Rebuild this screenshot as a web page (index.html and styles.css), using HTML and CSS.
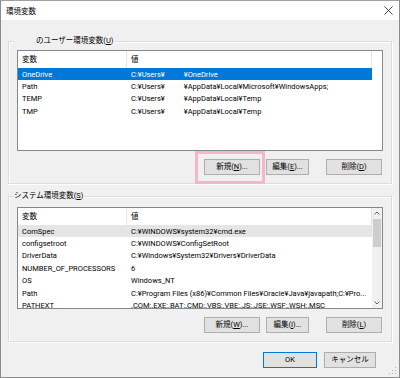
FILE: index.html
```html
<!DOCTYPE html>
<html lang="ja">

<head>
    <meta charset="UTF-8">
    <meta name="viewport" content="width=device-width, initial-scale=1.0">
    <title>環境変数</title>
    <link rel="stylesheet" href="styles.css">
</head>

<body>
    <div class="window">
        <div class="titlebar">
            <span class="title">環境変数</span>
            <svg class="close" width="9" height="9" viewBox="0 0 9 9">
                <path d="M0.5 0.5 L8.5 8.5 M8.5 0.5 L0.5 8.5" stroke="#333" stroke-width="0.9" fill="none" />
            </svg>
        </div>

        <div class="content">
            <!-- user variables -->
            <div class="group group-user">
                <span class="group-label user-label">のユーザー環境変数(<u>U</u>)</span>
                <div class="list list-user">
                    <div class="row head">
                        <span class="col-name">変数</span>
                        <span class="col-value">値</span>
                    </div>
                    <div class="row selected">
                        <span class="col-name">OneDrive</span>
                        <span class="col-value">C:¥Users¥<span class="blank"></span>¥OneDrive</span>
                    </div>
                    <div class="row">
                        <span class="col-name">Path</span>
                        <span class="col-value">C:¥Users¥<span class="blank"></span>¥AppData¥Local¥Microsoft¥WindowsApps;</span>
                    </div>
                    <div class="row">
                        <span class="col-name">TEMP</span>
                        <span class="col-value">C:¥Users¥<span class="blank"></span>¥AppData¥Local¥Temp</span>
                    </div>
                    <div class="row">
                        <span class="col-name">TMP</span>
                        <span class="col-value">C:¥Users¥<span class="blank"></span>¥AppData¥Local¥Temp</span>
                    </div>
                </div>
                <div class="buttons">
                    <button class="btn btn-new">新規(<u>N</u>)...</button>
                    <button class="btn btn-edit">編集(<u>E</u>)...</button>
                    <button class="btn btn-del">削除(<u>D</u>)</button>
                </div>
                <div class="highlight"></div>
            </div>

            <!-- system variables -->
            <div class="group group-system">
                <span class="group-label">システム環境変数(<u>S</u>)</span>
                <div class="list list-system">
                    <div class="rows">
                        <div class="row head">
                            <span class="col-name">変数</span>
                            <span class="col-value">値</span>
                        </div>
                        <div class="row hover">
                            <span class="col-name">ComSpec</span>
                            <span class="col-value">C:¥WINDOWS¥system32¥cmd.exe</span>
                        </div>
                        <div class="row">
                            <span class="col-name">configsetroot</span>
                            <span class="col-value">C:¥WINDOWS¥ConfigSetRoot</span>
                        </div>
                        <div class="row">
                            <span class="col-name">DriverData</span>
                            <span class="col-value">C:¥Windows¥System32¥Drivers¥DriverData</span>
                        </div>
                        <div class="row">
                            <span class="col-name">NUMBER_OF_PROCESSORS</span>
                            <span class="col-value">6</span>
                        </div>
                        <div class="row">
                            <span class="col-name">OS</span>
                            <span class="col-value">Windows_NT</span>
                        </div>
                        <div class="row">
                            <span class="col-name">Path</span>
                            <span class="col-value">C:¥Program Files (x86)¥Common Files¥Oracle¥Java¥javapath;C:¥Pro...</span>
                        </div>
                        <div class="row">
                            <span class="col-name">PATHEXT</span>
                            <span class="col-value">.COM;.EXE;.BAT;.CMD;.VBS;.VBE;.JS;.JSE;.WSF;.WSH;.MSC</span>
                        </div>
                    </div>
                    <div class="scrollbar">
                        <svg class="arrow" width="10" height="11" viewBox="0 0 10 11">
                            <path d="M2.5 6.5 L5 4 L7.5 6.5" stroke="#606060" stroke-width="1" fill="none" />
                        </svg>
                        <div class="thumb"></div>
                        <div class="track"></div>
                        <svg class="arrow" width="10" height="11" viewBox="0 0 10 11">
                            <path d="M2.5 4.5 L5 7 L7.5 4.5" stroke="#606060" stroke-width="1" fill="none" />
                        </svg>
                    </div>
                </div>
                <div class="buttons">
                    <button class="btn btn-new">新規(<u>W</u>)...</button>
                    <button class="btn btn-edit">編集(<u>I</u>)...</button>
                    <button class="btn btn-del">削除(<u>L</u>)</button>
                </div>
            </div>

            <div class="footer">
                <button class="btn btn-ok">OK</button>
                <button class="btn btn-cancel">キャンセル</button>
            </div>
        </div>

        <svg class="grip" width="8" height="8" viewBox="0 0 8 8">
            <rect x="6" y="0" width="1" height="1" fill="#b0b0b0" />
            <rect x="3" y="3" width="1" height="1" fill="#b0b0b0" />
            <rect x="6" y="3" width="1" height="1" fill="#b0b0b0" />
            <rect x="0" y="6" width="1" height="1" fill="#b0b0b0" />
            <rect x="3" y="6" width="1" height="1" fill="#b0b0b0" />
            <rect x="6" y="6" width="1" height="1" fill="#b0b0b0" />
        </svg>
    </div>
</body>

</html>
```

FILE: styles.css
```css
body {
    margin: 0;
    padding: 0;
    background-color: #fff;
    font-family: Roboto, "Noto Sans CJK JP", sans-serif;
    font-size: 7.5px;
    color: #000;
}

.window {
    position: relative;
    width: 400px;
    height: 378px;
    box-sizing: border-box;
    border: 1px solid #8c8c8c;
    border-top-color: #a0a0a0;
    background-color: #f0f0f0;
    display: flex;
    flex-direction: column;
}

.titlebar {
    height: 19px;
    background-color: #fff;
    display: flex;
    align-items: center;
    justify-content: space-between;
    padding: 0 5px 0 5px;
    flex-shrink: 0;
}

.title {
    font-size: 7.5px;
}

.close {
    margin-right: 1px;
}

.content {
    padding: 21px 0 0 7px;
    display: flex;
    flex-direction: column;
}

.group {
    position: relative;
    width: 384px;
    box-sizing: border-box;
    border: 1px solid #dcdcdc;
    box-shadow: inset 1px 1px 0 #fff, 1px 1px 0 #fff;
    padding: 8px 8px 8px 8px;
}

.group-system {
    margin-top: 12px;
    padding-top: 10px;
}

.group-label {
    position: absolute;
    top: -6px;
    left: 4px;
    background-color: #f0f0f0;
    padding: 0 2px 0 1px;
    line-height: 10px;
}

.user-label {
    padding-left: 23px;
}

u {
    text-decoration-thickness: 1px;
    text-underline-offset: 1px;
}

/* list views */
.list {
    background-color: #fff;
    border: 1px solid #828790;
    box-sizing: border-box;
    overflow: hidden;
}

.list-user {
    height: 101px;
}

.list-system {
    height: 102px;
    display: flex;
}

.rows {
    flex: 1;
}

.row {
    display: flex;
    height: 12.4px;
    width: 354px;
    align-items: center;
    white-space: nowrap;
}

.row.head {
    height: 17px;
    width: auto;
}

.row.head .col-value {
    border-right: 1px solid #e5e5e5;
    width: 240px;
    flex: none;
    height: 17px;
    line-height: 17px;
}

.row.head .col-name {
    border-right: 1px solid #e5e5e5;
    height: 17px;
    line-height: 17px;
}

.col-name {
    width: 109px;
    box-sizing: border-box;
    padding-left: 4px;
    flex-shrink: 0;
    overflow: hidden;
}

.col-value {
    padding-left: 4px;
    overflow: hidden;
    flex: 1;
}

.blank {
    display: inline-block;
    width: 19px;
}

.row.selected {
    background-color: #0078d7;
    color: #fff;
}

.row.hover {
    background-color: #e5e5e5;
}

.scrollbar {
    width: 10px;
    background-color: #f0f0f0;
    display: flex;
    flex-direction: column;
}

.arrow {
    display: block;
    flex-shrink: 0;
}

.thumb {
    height: 28px;
    background-color: #cdcdcd;
    margin: 0 1px;
}

.track {
    flex: 1;
}

/* buttons */
.buttons {
    display: flex;
    margin-top: 8px;
}

.btn {
    height: 16px;
    box-sizing: border-box;
    border: 1px solid #adadad;
    background-color: #e1e1e1;
    font-family: Roboto, "Noto Sans CJK JP", sans-serif;
    font-size: 7.5px;
    color: #000;
    padding: 0;
    line-height: 14px;
}

.btn-new {
    width: 56px;
    margin-left: 187px;
}

.btn-edit {
    width: 43px;
    margin-left: 6px;
}

.btn-del {
    width: 56px;
    margin-left: 17px;
}

.highlight {
    position: absolute;
    left: 186px;
    top: 109px;
    width: 70px;
    height: 33px;
    box-sizing: border-box;
    border: 3px solid #f5b5cf;
}

.footer {
    display: flex;
    margin-top: 10px;
    margin-left: 255px;
    gap: 7px;
}

.btn-ok {
    width: 54px;
    border-color: #0078d7;
}

.btn-cancel {
    width: 52px;
}

.grip {
    position: absolute;
    right: 2px;
    bottom: 2px;
}
```
